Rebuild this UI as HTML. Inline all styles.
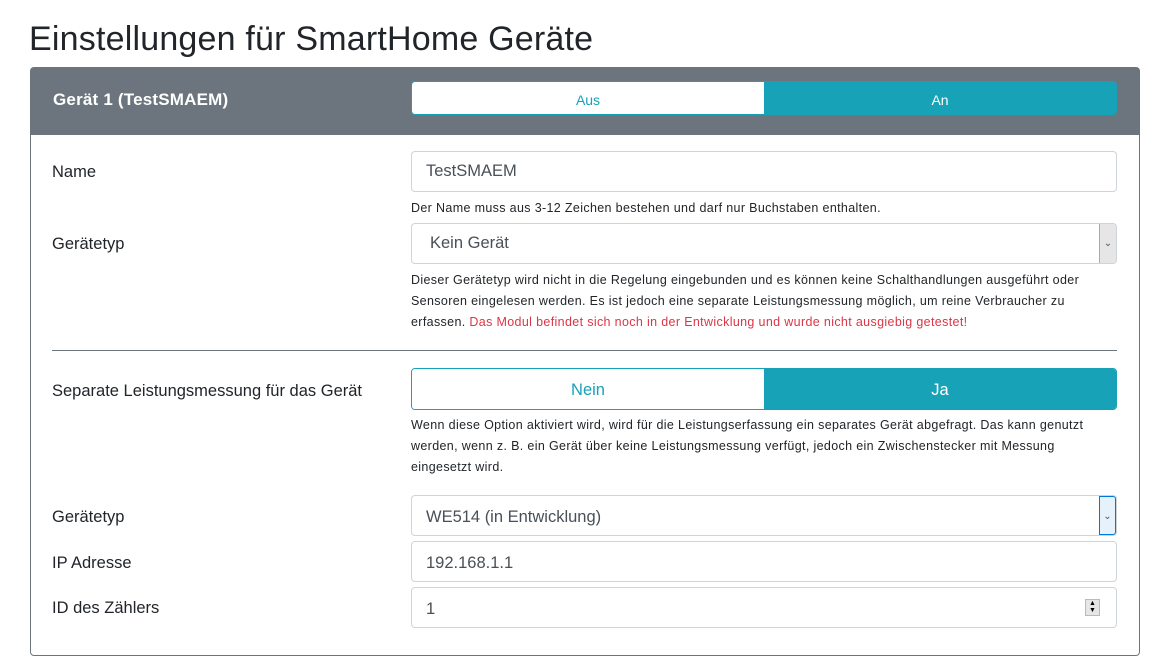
<!DOCTYPE html><html><head><meta charset="utf-8"><style>
*{box-sizing:border-box;margin:0;padding:0}
body{width:1160px;height:670px;background:#fff;font-family:"Liberation Sans",sans-serif;color:#212529;position:relative;overflow:hidden}
.a{position:absolute}
h1{position:absolute;left:29px;top:20px;font-weight:400;font-size:34px;color:#212529;letter-spacing:0.2px}
.card{left:30px;top:67px;width:1110px;height:589px;border:1px solid #6c757d;border-radius:4px}
.hdr{left:31px;top:68px;width:1108px;height:67px;background:#6c757d}
.lbl{position:absolute;left:52px;font-size:16.5px}
.inp{position:absolute;left:411px;width:706px;height:41px;border:1px solid #ced4da;border-radius:4px;font-size:16.5px;padding:0 14px;line-height:39px;color:#495057}
.help{position:absolute;left:411px;font-size:12.5px;line-height:21px;width:720px;color:#212529;white-space:nowrap;letter-spacing:0.35px}
.tog{position:absolute;left:411px;width:706px;display:flex;border:1px solid #17a2b8;border-radius:4px;overflow:hidden}
.tog div{flex:1;text-align:center;color:#17a2b8;background:#fff}
.tog div.on{background:#17a2b8;color:#fff}
.arr{position:absolute;right:0;top:0;width:17px;height:39px;background:#e6e6e6;border-left:1px solid #aaa;font-size:10px;text-align:center;line-height:39px;color:#555}
</style></head><body>
<h1>Einstellungen für SmartHome Geräte</h1>
<div class="a card"></div>
<div class="a hdr"></div>
<div class="a" style="left:53px;top:90px;color:#fff;font-weight:700;font-size:17px;letter-spacing:0.2px">Gerät 1 (TestSMAEM)</div>
<div class="tog" style="top:81px;height:34px;line-height:36px;font-size:14px"><div>Aus</div><div class="on">An</div></div>

<div class="lbl" style="top:163px">Name</div>
<div class="inp" style="top:151px">TestSMAEM</div>
<div class="help" style="top:198px">Der Name muss aus 3-12 Zeichen bestehen und darf nur Buchstaben enthalten.</div>

<div class="lbl" style="top:235px">Gerätetyp</div>
<div class="inp" style="top:223px;padding-left:18px">Kein Gerät<div class="arr" style="border-radius:0 3px 3px 0">&#8964;</div></div>
<div class="help" style="top:270px">Dieser Gerätetyp wird nicht in die Regelung eingebunden und es können keine Schalthandlungen ausgeführt oder<br>Sensoren eingelesen werden. Es ist jedoch eine separate Leistungsmessung möglich, um reine Verbraucher zu<br>erfassen. <span style="color:#dc3545">Das Modul befindet sich noch in der Entwicklung und wurde nicht ausgiebig getestet!</span></div>

<div class="a" style="left:52px;top:350px;width:1065px;height:1px;background:#6c757d"></div>

<div class="lbl" style="top:382px">Separate Leistungsmessung für das Gerät</div>
<div class="tog" style="top:368px;height:42px;line-height:42px;font-size:16.5px"><div>Nein</div><div class="on">Ja</div></div>
<div class="help" style="top:415px">Wenn diese Option aktiviert wird, wird für die Leistungserfassung ein separates Gerät abgefragt. Das kann genutzt<br>werden, wenn z. B. ein Gerät über keine Leistungsmessung verfügt, jedoch ein Zwischenstecker mit Messung<br>eingesetzt wird.</div>

<div class="lbl" style="top:508px">Gerätetyp</div>
<div class="inp" style="top:495px;line-height:42px">WE514 (in Entwicklung)<div class="arr" style="background:#e5f1fb;border:1px solid #0078d7;border-radius:0 3px 3px 0">&#8964;</div></div>

<div class="lbl" style="top:554px">IP Adresse</div>
<div class="inp" style="top:541px;line-height:42px">192.168.1.1</div>

<div class="lbl" style="top:599px">ID des Zählers</div>
<div class="inp" style="top:587px;line-height:42px">1<div class="a" style="right:16px;top:11px;width:15px;height:17px;background:#e6e6e6;border:1px solid #bbb;font-size:7px;line-height:7px;text-align:center;color:#000">▲<br>▼</div></div>
</body></html>
